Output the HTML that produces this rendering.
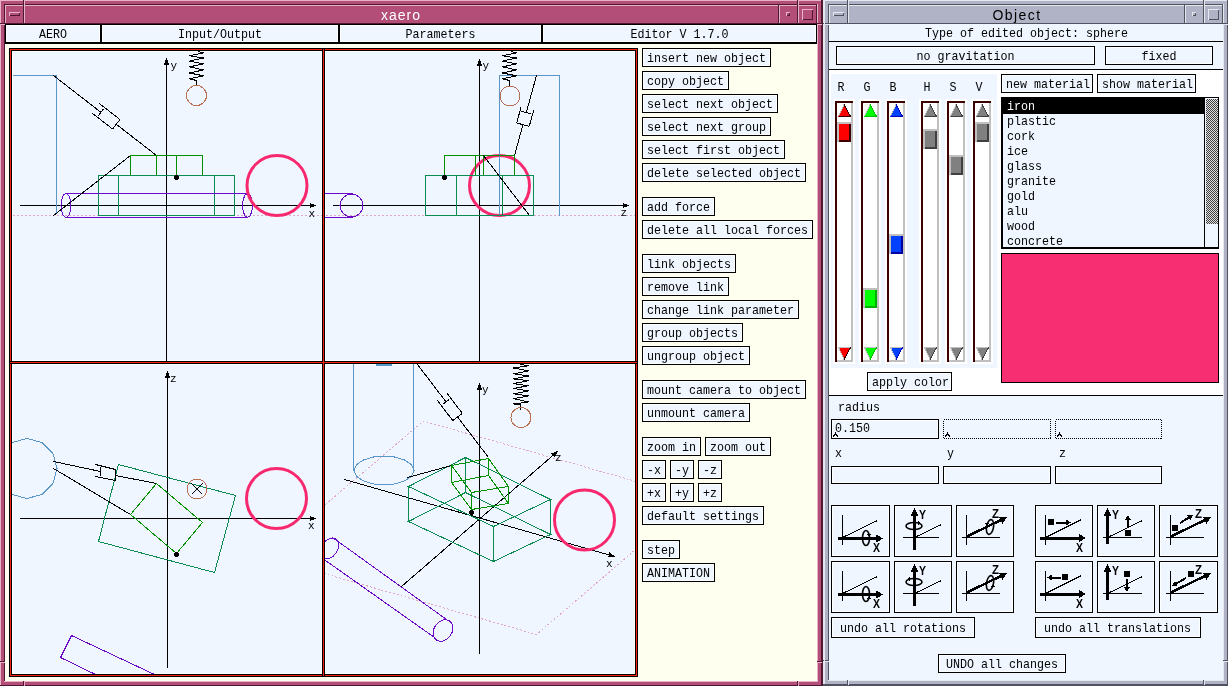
<!DOCTYPE html>
<html><head><meta charset="utf-8"><title>xaero</title>
<style>html,body{margin:0;padding:0;background:#fff;}body{width:1228px;height:686px;overflow:hidden;}svg{display:block;will-change:transform}</style>
</head><body>
<svg width="1228" height="686" viewBox="0 0 1228 686" shape-rendering="crispEdges" text-rendering="optimizeLegibility">
<rect x="0" y="0" width="822" height="686" fill="#b24e77"/>
<rect x="0" y="0" width="822" height="1" fill="#e6b3c9"/>
<rect x="0" y="0" width="1" height="686" fill="#e6b3c9"/>
<rect x="0" y="685" width="822" height="1" fill="#4e1830"/>
<rect x="821" y="0" width="1" height="686" fill="#4e1830"/>
<rect x="4" y="4" width="814" height="1" fill="#4e1830"/>
<rect x="4" y="4" width="1" height="678" fill="#4e1830"/>
<rect x="4" y="681" width="814" height="1" fill="#e6b3c9"/>
<rect x="817" y="4" width="1" height="678" fill="#e6b3c9"/>
<rect x="23" y="0" width="1" height="5" fill="#4e1830"/>
<rect x="24" y="0" width="1" height="5" fill="#e6b3c9"/>
<rect x="23" y="681" width="1" height="5" fill="#4e1830"/>
<rect x="24" y="681" width="1" height="5" fill="#e6b3c9"/>
<rect x="797" y="0" width="1" height="5" fill="#4e1830"/>
<rect x="798" y="0" width="1" height="5" fill="#e6b3c9"/>
<rect x="797" y="681" width="1" height="5" fill="#4e1830"/>
<rect x="798" y="681" width="1" height="5" fill="#e6b3c9"/>
<rect x="0" y="23" width="5" height="1" fill="#4e1830"/>
<rect x="0" y="24" width="5" height="1" fill="#e6b3c9"/>
<rect x="817" y="23" width="5" height="1" fill="#4e1830"/>
<rect x="817" y="24" width="5" height="1" fill="#e6b3c9"/>
<rect x="0" y="661" width="5" height="1" fill="#4e1830"/>
<rect x="0" y="662" width="5" height="1" fill="#e6b3c9"/>
<rect x="817" y="661" width="5" height="1" fill="#4e1830"/>
<rect x="817" y="662" width="5" height="1" fill="#e6b3c9"/>
<rect x="5" y="5" width="19" height="1" fill="#e6b3c9"/>
<rect x="5" y="5" width="1" height="19" fill="#e6b3c9"/>
<rect x="5" y="23" width="19" height="1" fill="#4e1830"/>
<rect x="23" y="5" width="1" height="19" fill="#4e1830"/>
<rect x="24" y="5" width="755" height="1" fill="#e6b3c9"/>
<rect x="24" y="5" width="1" height="19" fill="#e6b3c9"/>
<rect x="24" y="23" width="755" height="1" fill="#4e1830"/>
<rect x="778" y="5" width="1" height="19" fill="#4e1830"/>
<rect x="779" y="5" width="19" height="1" fill="#e6b3c9"/>
<rect x="779" y="5" width="1" height="19" fill="#e6b3c9"/>
<rect x="779" y="23" width="19" height="1" fill="#4e1830"/>
<rect x="797" y="5" width="1" height="19" fill="#4e1830"/>
<rect x="798" y="5" width="19" height="1" fill="#e6b3c9"/>
<rect x="798" y="5" width="1" height="19" fill="#e6b3c9"/>
<rect x="798" y="23" width="19" height="1" fill="#4e1830"/>
<rect x="816" y="5" width="1" height="19" fill="#4e1830"/>
<rect x="822" y="0" width="1" height="686" fill="#4e1830"/>
<rect x="9" y="12" width="11" height="1" fill="#e6b3c9"/>
<rect x="9" y="12" width="1" height="4" fill="#e6b3c9"/>
<rect x="10" y="15" width="10" height="1" fill="#4e1830"/>
<rect x="19" y="13" width="1" height="3" fill="#4e1830"/>
<rect x="786" y="12" width="4" height="1" fill="#e6b3c9"/>
<rect x="786" y="12" width="1" height="4" fill="#e6b3c9"/>
<rect x="787" y="15" width="3" height="1" fill="#4e1830"/>
<rect x="789" y="13" width="1" height="3" fill="#4e1830"/>
<rect x="802" y="9" width="11" height="1" fill="#e6b3c9"/>
<rect x="802" y="9" width="1" height="11" fill="#e6b3c9"/>
<rect x="803" y="19" width="10" height="1" fill="#4e1830"/>
<rect x="812" y="10" width="1" height="10" fill="#4e1830"/>
<text x="401" y="20" fill="#ffffff" font-family="Liberation Sans" font-size="14" text-anchor="middle" letter-spacing="1">xaero</text>
<rect x="5" y="24" width="812" height="657" fill="#fffff0"/>
<rect x="5" y="24" width="812" height="20" fill="#000"/>
<rect x="6" y="25" width="94" height="17" fill="#ffffff"/>
<rect x="7" y="26" width="92" height="15" fill="#eff6ff"/>
<rect x="102" y="25" width="236" height="17" fill="#ffffff"/>
<rect x="103" y="26" width="234" height="15" fill="#eff6ff"/>
<rect x="340" y="25" width="201" height="17" fill="#ffffff"/>
<rect x="341" y="26" width="199" height="15" fill="#eff6ff"/>
<rect x="543" y="25" width="273" height="17" fill="#ffffff"/>
<rect x="544" y="26" width="271" height="15" fill="#eff6ff"/>
<text x="39.0" y="38" fill="#000" font-family="Liberation Mono" font-size="13" textLength="28" lengthAdjust="spacingAndGlyphs" >AERO</text>
<text x="178.0" y="38" fill="#000" font-family="Liberation Mono" font-size="13" textLength="84" lengthAdjust="spacingAndGlyphs" >Input/Output</text>
<text x="405.5" y="38" fill="#000" font-family="Liberation Mono" font-size="13" textLength="70" lengthAdjust="spacingAndGlyphs" >Parameters</text>
<text x="630.5" y="38" fill="#000" font-family="Liberation Mono" font-size="13" textLength="98" lengthAdjust="spacingAndGlyphs" >Editor V 1.7.0</text>
<rect x="9" y="48" width="629" height="629" fill="#000"/>
<rect x="10" y="49" width="627" height="627" fill="#f42010"/>
<rect x="11" y="50" width="625" height="625" fill="#000"/>
<rect x="12" y="51" width="310" height="310" fill="#ffffff"/>
<rect x="13" y="52" width="308" height="308" fill="#eff6ff"/>
<rect x="325" y="51" width="310" height="310" fill="#ffffff"/>
<rect x="326" y="52" width="308" height="308" fill="#eff6ff"/>
<rect x="12" y="364" width="310" height="310" fill="#ffffff"/>
<rect x="13" y="365" width="308" height="308" fill="#eff6ff"/>
<rect x="325" y="364" width="310" height="310" fill="#ffffff"/>
<rect x="326" y="365" width="308" height="308" fill="#eff6ff"/>
<rect x="322" y="48" width="3" height="629" fill="#000"/>
<rect x="9" y="361" width="629" height="3" fill="#000"/>
<rect x="323" y="49" width="1" height="627" fill="#f42010"/>
<rect x="10" y="362" width="627" height="1" fill="#f42010"/>
<rect x="642" y="48" width="129" height="19" fill="#000"/>
<rect x="643" y="49" width="127" height="17" fill="#ffffff"/>
<rect x="644" y="50" width="125" height="15" fill="#eff6ff"/>
<text x="647" y="62" fill="#000" font-family="Liberation Mono" font-size="13" textLength="119" lengthAdjust="spacingAndGlyphs" >insert new object</text>
<rect x="642" y="71" width="87" height="19" fill="#000"/>
<rect x="643" y="72" width="85" height="17" fill="#ffffff"/>
<rect x="644" y="73" width="83" height="15" fill="#eff6ff"/>
<text x="647" y="85" fill="#000" font-family="Liberation Mono" font-size="13" textLength="77" lengthAdjust="spacingAndGlyphs" >copy object</text>
<rect x="642" y="94" width="136" height="19" fill="#000"/>
<rect x="643" y="95" width="134" height="17" fill="#ffffff"/>
<rect x="644" y="96" width="132" height="15" fill="#eff6ff"/>
<text x="647" y="108" fill="#000" font-family="Liberation Mono" font-size="13" textLength="126" lengthAdjust="spacingAndGlyphs" >select next object</text>
<rect x="642" y="117" width="129" height="19" fill="#000"/>
<rect x="643" y="118" width="127" height="17" fill="#ffffff"/>
<rect x="644" y="119" width="125" height="15" fill="#eff6ff"/>
<text x="647" y="131" fill="#000" font-family="Liberation Mono" font-size="13" textLength="119" lengthAdjust="spacingAndGlyphs" >select next group</text>
<rect x="642" y="140" width="143" height="19" fill="#000"/>
<rect x="643" y="141" width="141" height="17" fill="#ffffff"/>
<rect x="644" y="142" width="139" height="15" fill="#eff6ff"/>
<text x="647" y="154" fill="#000" font-family="Liberation Mono" font-size="13" textLength="133" lengthAdjust="spacingAndGlyphs" >select first object</text>
<rect x="642" y="163" width="164" height="19" fill="#000"/>
<rect x="643" y="164" width="162" height="17" fill="#ffffff"/>
<rect x="644" y="165" width="160" height="15" fill="#eff6ff"/>
<text x="647" y="177" fill="#000" font-family="Liberation Mono" font-size="13" textLength="154" lengthAdjust="spacingAndGlyphs" >delete selected object</text>
<rect x="642" y="197" width="73" height="19" fill="#000"/>
<rect x="643" y="198" width="71" height="17" fill="#ffffff"/>
<rect x="644" y="199" width="69" height="15" fill="#eff6ff"/>
<text x="647" y="211" fill="#000" font-family="Liberation Mono" font-size="13" textLength="63" lengthAdjust="spacingAndGlyphs" >add force</text>
<rect x="642" y="220" width="171" height="19" fill="#000"/>
<rect x="643" y="221" width="169" height="17" fill="#ffffff"/>
<rect x="644" y="222" width="167" height="15" fill="#eff6ff"/>
<text x="647" y="234" fill="#000" font-family="Liberation Mono" font-size="13" textLength="161" lengthAdjust="spacingAndGlyphs" >delete all local forces</text>
<rect x="642" y="254" width="94" height="19" fill="#000"/>
<rect x="643" y="255" width="92" height="17" fill="#ffffff"/>
<rect x="644" y="256" width="90" height="15" fill="#eff6ff"/>
<text x="647" y="268" fill="#000" font-family="Liberation Mono" font-size="13" textLength="84" lengthAdjust="spacingAndGlyphs" >link objects</text>
<rect x="642" y="277" width="87" height="19" fill="#000"/>
<rect x="643" y="278" width="85" height="17" fill="#ffffff"/>
<rect x="644" y="279" width="83" height="15" fill="#eff6ff"/>
<text x="647" y="291" fill="#000" font-family="Liberation Mono" font-size="13" textLength="77" lengthAdjust="spacingAndGlyphs" >remove link</text>
<rect x="642" y="300" width="157" height="19" fill="#000"/>
<rect x="643" y="301" width="155" height="17" fill="#ffffff"/>
<rect x="644" y="302" width="153" height="15" fill="#eff6ff"/>
<text x="647" y="314" fill="#000" font-family="Liberation Mono" font-size="13" textLength="147" lengthAdjust="spacingAndGlyphs" >change link parameter</text>
<rect x="642" y="323" width="101" height="19" fill="#000"/>
<rect x="643" y="324" width="99" height="17" fill="#ffffff"/>
<rect x="644" y="325" width="97" height="15" fill="#eff6ff"/>
<text x="647" y="337" fill="#000" font-family="Liberation Mono" font-size="13" textLength="91" lengthAdjust="spacingAndGlyphs" >group objects</text>
<rect x="642" y="346" width="108" height="19" fill="#000"/>
<rect x="643" y="347" width="106" height="17" fill="#ffffff"/>
<rect x="644" y="348" width="104" height="15" fill="#eff6ff"/>
<text x="647" y="360" fill="#000" font-family="Liberation Mono" font-size="13" textLength="98" lengthAdjust="spacingAndGlyphs" >ungroup object</text>
<rect x="642" y="380" width="164" height="19" fill="#000"/>
<rect x="643" y="381" width="162" height="17" fill="#ffffff"/>
<rect x="644" y="382" width="160" height="15" fill="#eff6ff"/>
<text x="647" y="394" fill="#000" font-family="Liberation Mono" font-size="13" textLength="154" lengthAdjust="spacingAndGlyphs" >mount camera to object</text>
<rect x="642" y="403" width="108" height="19" fill="#000"/>
<rect x="643" y="404" width="106" height="17" fill="#ffffff"/>
<rect x="644" y="405" width="104" height="15" fill="#eff6ff"/>
<text x="647" y="417" fill="#000" font-family="Liberation Mono" font-size="13" textLength="98" lengthAdjust="spacingAndGlyphs" >unmount camera</text>
<rect x="642" y="437" width="59" height="19" fill="#000"/>
<rect x="643" y="438" width="57" height="17" fill="#ffffff"/>
<rect x="644" y="439" width="55" height="15" fill="#eff6ff"/>
<text x="647" y="451" fill="#000" font-family="Liberation Mono" font-size="13" textLength="49" lengthAdjust="spacingAndGlyphs" >zoom in</text>
<rect x="705" y="437" width="66" height="19" fill="#000"/>
<rect x="706" y="438" width="64" height="17" fill="#ffffff"/>
<rect x="707" y="439" width="62" height="15" fill="#eff6ff"/>
<text x="710" y="451" fill="#000" font-family="Liberation Mono" font-size="13" textLength="56" lengthAdjust="spacingAndGlyphs" >zoom out</text>
<rect x="642" y="460" width="24" height="19" fill="#000"/>
<rect x="643" y="461" width="22" height="17" fill="#ffffff"/>
<rect x="644" y="462" width="20" height="15" fill="#eff6ff"/>
<text x="647" y="474" fill="#000" font-family="Liberation Mono" font-size="13" textLength="14" lengthAdjust="spacingAndGlyphs" >-x</text>
<rect x="670" y="460" width="24" height="19" fill="#000"/>
<rect x="671" y="461" width="22" height="17" fill="#ffffff"/>
<rect x="672" y="462" width="20" height="15" fill="#eff6ff"/>
<text x="675" y="474" fill="#000" font-family="Liberation Mono" font-size="13" textLength="14" lengthAdjust="spacingAndGlyphs" >-y</text>
<rect x="698" y="460" width="24" height="19" fill="#000"/>
<rect x="699" y="461" width="22" height="17" fill="#ffffff"/>
<rect x="700" y="462" width="20" height="15" fill="#eff6ff"/>
<text x="703" y="474" fill="#000" font-family="Liberation Mono" font-size="13" textLength="14" lengthAdjust="spacingAndGlyphs" >-z</text>
<rect x="642" y="483" width="24" height="19" fill="#000"/>
<rect x="643" y="484" width="22" height="17" fill="#ffffff"/>
<rect x="644" y="485" width="20" height="15" fill="#eff6ff"/>
<text x="647" y="497" fill="#000" font-family="Liberation Mono" font-size="13" textLength="14" lengthAdjust="spacingAndGlyphs" >+x</text>
<rect x="670" y="483" width="24" height="19" fill="#000"/>
<rect x="671" y="484" width="22" height="17" fill="#ffffff"/>
<rect x="672" y="485" width="20" height="15" fill="#eff6ff"/>
<text x="675" y="497" fill="#000" font-family="Liberation Mono" font-size="13" textLength="14" lengthAdjust="spacingAndGlyphs" >+y</text>
<rect x="698" y="483" width="24" height="19" fill="#000"/>
<rect x="699" y="484" width="22" height="17" fill="#ffffff"/>
<rect x="700" y="485" width="20" height="15" fill="#eff6ff"/>
<text x="703" y="497" fill="#000" font-family="Liberation Mono" font-size="13" textLength="14" lengthAdjust="spacingAndGlyphs" >+z</text>
<rect x="642" y="506" width="122" height="19" fill="#000"/>
<rect x="643" y="507" width="120" height="17" fill="#ffffff"/>
<rect x="644" y="508" width="118" height="15" fill="#eff6ff"/>
<text x="647" y="520" fill="#000" font-family="Liberation Mono" font-size="13" textLength="112" lengthAdjust="spacingAndGlyphs" >default settings</text>
<rect x="642" y="540" width="38" height="19" fill="#000"/>
<rect x="643" y="541" width="36" height="17" fill="#ffffff"/>
<rect x="644" y="542" width="34" height="15" fill="#eff6ff"/>
<text x="647" y="554" fill="#000" font-family="Liberation Mono" font-size="13" textLength="28" lengthAdjust="spacingAndGlyphs" >step</text>
<rect x="642" y="563" width="73" height="19" fill="#000"/>
<rect x="643" y="564" width="71" height="17" fill="#ffffff"/>
<rect x="644" y="565" width="69" height="15" fill="#eff6ff"/>
<text x="647" y="577" fill="#000" font-family="Liberation Mono" font-size="13" textLength="63" lengthAdjust="spacingAndGlyphs" >ANIMATION</text>
<rect x="823" y="0" width="405" height="685" fill="#b0b3c6"/>
<rect x="823" y="0" width="405" height="1" fill="#e6e8f0"/>
<rect x="823" y="0" width="1" height="685" fill="#e6e8f0"/>
<rect x="823" y="684" width="405" height="1" fill="#50535f"/>
<rect x="1227" y="0" width="1" height="685" fill="#50535f"/>
<rect x="828" y="4" width="396" height="1" fill="#50535f"/>
<rect x="828" y="4" width="1" height="677" fill="#50535f"/>
<rect x="828" y="680" width="396" height="1" fill="#e6e8f0"/>
<rect x="1223" y="4" width="1" height="677" fill="#e6e8f0"/>
<rect x="847" y="0" width="1" height="5" fill="#50535f"/>
<rect x="848" y="0" width="1" height="5" fill="#e6e8f0"/>
<rect x="847" y="680" width="1" height="5" fill="#50535f"/>
<rect x="848" y="680" width="1" height="5" fill="#e6e8f0"/>
<rect x="1203" y="0" width="1" height="5" fill="#50535f"/>
<rect x="1204" y="0" width="1" height="5" fill="#e6e8f0"/>
<rect x="1203" y="680" width="1" height="5" fill="#50535f"/>
<rect x="1204" y="680" width="1" height="5" fill="#e6e8f0"/>
<rect x="823" y="23" width="6" height="1" fill="#50535f"/>
<rect x="823" y="24" width="6" height="1" fill="#e6e8f0"/>
<rect x="1223" y="23" width="5" height="1" fill="#50535f"/>
<rect x="1223" y="24" width="5" height="1" fill="#e6e8f0"/>
<rect x="823" y="660" width="6" height="1" fill="#50535f"/>
<rect x="823" y="661" width="6" height="1" fill="#e6e8f0"/>
<rect x="1223" y="660" width="5" height="1" fill="#50535f"/>
<rect x="1223" y="661" width="5" height="1" fill="#e6e8f0"/>
<rect x="829" y="5" width="19" height="1" fill="#e6e8f0"/>
<rect x="829" y="5" width="1" height="19" fill="#e6e8f0"/>
<rect x="829" y="23" width="19" height="1" fill="#50535f"/>
<rect x="847" y="5" width="1" height="19" fill="#50535f"/>
<rect x="848" y="5" width="337" height="1" fill="#e6e8f0"/>
<rect x="848" y="5" width="1" height="19" fill="#e6e8f0"/>
<rect x="848" y="23" width="337" height="1" fill="#50535f"/>
<rect x="1184" y="5" width="1" height="19" fill="#50535f"/>
<rect x="1185" y="5" width="19" height="1" fill="#e6e8f0"/>
<rect x="1185" y="5" width="1" height="19" fill="#e6e8f0"/>
<rect x="1185" y="23" width="19" height="1" fill="#50535f"/>
<rect x="1203" y="5" width="1" height="19" fill="#50535f"/>
<rect x="1204" y="5" width="19" height="1" fill="#e6e8f0"/>
<rect x="1204" y="5" width="1" height="19" fill="#e6e8f0"/>
<rect x="1204" y="23" width="19" height="1" fill="#50535f"/>
<rect x="1222" y="5" width="1" height="19" fill="#50535f"/>
<rect x="823" y="685" width="405" height="1" fill="#50535f"/>
<rect x="824" y="1" width="1" height="683" fill="#e6e8f0"/>
<rect x="833" y="12" width="11" height="1" fill="#e6e8f0"/>
<rect x="833" y="12" width="1" height="4" fill="#e6e8f0"/>
<rect x="834" y="15" width="10" height="1" fill="#50535f"/>
<rect x="843" y="13" width="1" height="3" fill="#50535f"/>
<rect x="1192" y="12" width="4" height="1" fill="#e6e8f0"/>
<rect x="1192" y="12" width="1" height="4" fill="#e6e8f0"/>
<rect x="1193" y="15" width="3" height="1" fill="#50535f"/>
<rect x="1195" y="13" width="1" height="3" fill="#50535f"/>
<rect x="1208" y="9" width="11" height="1" fill="#e6e8f0"/>
<rect x="1208" y="9" width="1" height="11" fill="#e6e8f0"/>
<rect x="1209" y="19" width="10" height="1" fill="#50535f"/>
<rect x="1218" y="10" width="1" height="10" fill="#50535f"/>
<text x="1017" y="20" fill="#000" font-family="Liberation Sans" font-size="14" text-anchor="middle" letter-spacing="1.4">Object</text>
<rect x="829" y="24" width="394" height="656" fill="#eff6ff"/>
<clipPath id="vp1"><rect x="12" y="51" width="310" height="310"/></clipPath><g clip-path="url(#vp1)">
<polyline points="12.50,215.50 322.50,215.50" fill="none" stroke="#e0a8c8" stroke-width="1" stroke-dasharray="2 2"/>
<line x1="166.50" y1="360.50" x2="166.50" y2="58.50" stroke="#000000" stroke-width="1" />
<polygon points="166.50,57.50 169.10,64.50 163.90,64.50" fill="#000000"/>
<line x1="19.50" y1="205.50" x2="315.50" y2="205.50" stroke="#000000" stroke-width="1" />
<polygon points="316.50,205.50 309.50,208.10 309.50,202.90" fill="#000000"/>
<text x="170.5" y="69" fill="#000" font-family="Liberation Mono" font-size="11">y</text>
<text x="308.5" y="217" fill="#000" font-family="Liberation Mono" font-size="11">x</text>
<polyline points="12.50,75.50 56.50,75.50 56.50,213.50" fill="none" stroke="#5a96c8" stroke-width="1" />
<polygon points="130.50,155.50 202.50,155.50 202.50,175.50 130.50,175.50" fill="none" stroke="#009000" stroke-width="1" />
<rect x="156" y="155" width="1" height="21" fill="#009000"/>
<rect x="176" y="155" width="1" height="21" fill="#009000"/>
<polygon points="98.50,175.50 234.50,175.50 234.50,215.50 98.50,215.50" fill="none" stroke="#0a8c50" stroke-width="1" />
<rect x="118" y="175" width="1" height="41" fill="#0a8c50"/>
<rect x="214" y="175" width="1" height="41" fill="#0a8c50"/>
<rect x="65" y="193" width="183" height="1" fill="#6a0ac8"/>
<rect x="65" y="217" width="183" height="1" fill="#6a0ac8"/>
<polygon points="71.00,205.50 70.33,211.50 68.50,215.89 66.00,217.50 63.50,215.89 61.67,211.50 61.00,205.50 61.67,199.50 63.50,195.11 66.00,193.50 68.50,195.11 70.33,199.50" fill="none" stroke="#6a0ac8" stroke-width="1" />
<polygon points="252.50,205.50 251.83,211.50 250.00,215.89 247.50,217.50 245.00,215.89 243.17,211.50 242.50,205.50 243.17,199.50 245.00,195.11 247.50,193.50 250.00,195.11 251.83,199.50" fill="none" stroke="#6a0ac8" stroke-width="1" />
<circle cx="277" cy="185.5" r="30" fill="none" stroke="#f8286e" stroke-width="3" shape-rendering="geometricPrecision"/>
<line x1="130.50" y1="155.50" x2="53.50" y2="215.50" stroke="#000000" stroke-width="1" />
<line x1="53.50" y1="75.50" x2="100.89" y2="112.30" stroke="#000000" stroke-width="1" />
<line x1="103.34" y1="109.15" x2="98.43" y2="115.46" stroke="#000000" stroke-width="1" />
<line x1="91.68" y1="112.75" x2="112.61" y2="129.00" stroke="#000000" stroke-width="1" />
<line x1="99.04" y1="103.27" x2="119.97" y2="119.53" stroke="#000000" stroke-width="1" />
<line x1="119.97" y1="119.53" x2="112.61" y2="129.00" stroke="#000000" stroke-width="1" />
<line x1="116.29" y1="124.27" x2="156.50" y2="155.50" stroke="#000000" stroke-width="1" />
<rect x="174" y="176" width="5" height="3" fill="#000000"/>
<rect x="175" y="175" width="3" height="5" fill="#000000"/>
<polyline points="198.50,51.50 203.50,52.90 189.50,55.80 203.50,58.00 189.50,61.10 203.50,63.80 189.50,66.90 203.50,69.90 189.50,73.00 203.50,75.80 189.50,78.80 196.50,80.50 196.50,85.50" fill="none" stroke="#000000" stroke-width="1" />
<polygon points="206.50,95.50 206.01,98.59 204.59,101.38 202.38,103.59 199.59,105.01 196.50,105.50 193.41,105.01 190.62,103.59 188.41,101.38 186.99,98.59 186.50,95.50 186.99,92.41 188.41,89.62 190.62,87.41 193.41,85.99 196.50,85.50 199.59,85.99 202.38,87.41 204.59,89.62 206.01,92.41" fill="none" stroke="#b87050" stroke-width="1" />
</g>
<clipPath id="vp2"><rect x="325" y="51" width="310" height="310"/></clipPath><g clip-path="url(#vp2)">
<polyline points="325.50,215.50 635.50,215.50" fill="none" stroke="#e0a8c8" stroke-width="1" stroke-dasharray="2 2"/>
<line x1="479.50" y1="360.50" x2="479.50" y2="59.50" stroke="#000000" stroke-width="1" />
<polygon points="479.50,58.50 482.10,65.50 476.90,65.50" fill="#000000"/>
<line x1="332.50" y1="205.50" x2="628.50" y2="205.50" stroke="#000000" stroke-width="1" />
<polygon points="629.50,205.50 622.50,208.10 622.50,202.90" fill="#000000"/>
<text x="482.5" y="69" fill="#000" font-family="Liberation Mono" font-size="11">y</text>
<text x="620.5" y="216" fill="#000" font-family="Liberation Mono" font-size="11">z</text>
<circle cx="499.5" cy="185.5" r="30" fill="none" stroke="#f8286e" stroke-width="3" shape-rendering="geometricPrecision"/>
<polyline points="499.50,215.50 499.50,75.50 559.50,75.50 559.50,215.50" fill="none" stroke="#5a96c8" stroke-width="1" />
<polygon points="444.50,155.50 514.50,155.50 514.50,175.50 444.50,175.50" fill="none" stroke="#009000" stroke-width="1" />
<rect x="475" y="155" width="1" height="21" fill="#009000"/>
<rect x="483" y="155" width="1" height="21" fill="#009000"/>
<polygon points="425.50,175.50 533.50,175.50 533.50,215.50 425.50,215.50" fill="none" stroke="#0a8c50" stroke-width="1" />
<rect x="456" y="175" width="1" height="41" fill="#0a8c50"/>
<rect x="502" y="175" width="1" height="41" fill="#0a8c50"/>
<rect x="325" y="193" width="28" height="1" fill="#6a0ac8"/>
<rect x="325" y="217" width="28" height="1" fill="#6a0ac8"/>
<polygon points="363.00,205.50 362.12,209.90 359.63,213.63 355.90,216.12 351.50,217.00 347.10,216.12 343.37,213.63 340.88,209.90 340.00,205.50 340.88,201.10 343.37,197.37 347.10,194.88 351.50,194.00 355.90,194.88 359.63,197.37 362.12,201.10" fill="none" stroke="#6a0ac8" stroke-width="1" />
<line x1="483.50" y1="155.50" x2="529.50" y2="215.50" stroke="#000000" stroke-width="1" />
<line x1="536.50" y1="75.50" x2="526.29" y2="112.62" stroke="#000000" stroke-width="1" />
<line x1="531.11" y1="113.95" x2="521.47" y2="111.30" stroke="#000000" stroke-width="1" />
<line x1="521.22" y1="106.56" x2="516.71" y2="122.95" stroke="#000000" stroke-width="1" />
<line x1="533.75" y1="110.01" x2="529.24" y2="126.40" stroke="#000000" stroke-width="1" />
<line x1="529.24" y1="126.40" x2="516.71" y2="122.95" stroke="#000000" stroke-width="1" />
<line x1="522.98" y1="124.67" x2="514.50" y2="155.50" stroke="#000000" stroke-width="1" />
<rect x="442" y="176" width="5" height="3" fill="#000000"/>
<rect x="443" y="175" width="3" height="5" fill="#000000"/>
<polyline points="511.50,51.50 516.50,52.90 502.50,55.80 516.50,58.00 502.50,61.10 516.50,63.80 502.50,66.90 516.50,69.90 502.50,73.00 516.50,75.80 502.50,78.80 509.50,80.50 509.50,85.50" fill="none" stroke="#000000" stroke-width="1" />
<polygon points="520.00,96.00 519.51,99.09 518.09,101.88 515.88,104.09 513.09,105.51 510.00,106.00 506.91,105.51 504.12,104.09 501.91,101.88 500.49,99.09 500.00,96.00 500.49,92.91 501.91,90.12 504.12,87.91 506.91,86.49 510.00,86.00 513.09,86.49 515.88,87.91 518.09,90.12 519.51,92.91" fill="none" stroke="#b87050" stroke-width="1" />
</g>
<clipPath id="vp3"><rect x="12" y="364" width="310" height="310"/></clipPath><g clip-path="url(#vp3)">
<line x1="167.50" y1="667.50" x2="167.50" y2="371.50" stroke="#000000" stroke-width="1" />
<polygon points="167.50,370.50 170.10,377.50 164.90,377.50" fill="#000000"/>
<line x1="19.50" y1="518.50" x2="315.50" y2="518.50" stroke="#000000" stroke-width="1" />
<polygon points="316.50,518.50 309.50,521.10 309.50,515.90" fill="#000000"/>
<text x="170" y="382" fill="#000" font-family="Liberation Mono" font-size="11">z</text>
<text x="308" y="529" fill="#000" font-family="Liberation Mono" font-size="11">x</text>
<polygon points="57.00,468.50 52.98,483.50 42.00,494.48 27.00,498.50 12.00,494.48 1.02,483.50 -3.00,468.50 1.02,453.50 12.00,442.52 27.00,438.50 42.00,442.52 52.98,453.50" fill="none" stroke="#5a96c8" stroke-width="1" />
<polygon points="118.50,464.50 235.50,495.50 214.50,572.50 98.50,541.50" fill="none" stroke="#0a8c50" stroke-width="1" />
<polygon points="156.50,483.50 202.50,522.50 176.50,553.50 130.50,514.50" fill="none" stroke="#009000" stroke-width="1" />
<polyline points="154.50,674.50 71.50,635.50 60.50,657.50 95.50,674.50" fill="none" stroke="#6a0ac8" stroke-width="1" />
<circle cx="276.5" cy="498.5" r="30" fill="none" stroke="#f8286e" stroke-width="3" shape-rendering="geometricPrecision"/>
<line x1="53.50" y1="461.50" x2="100.50" y2="471.50" stroke="#000000" stroke-width="1" />
<rect x="100" y="467" width="1" height="9" fill="#000000"/>
<line x1="95.50" y1="464.50" x2="115.50" y2="469.50" stroke="#000000" stroke-width="1" />
<line x1="95.50" y1="476.50" x2="115.50" y2="480.50" stroke="#000000" stroke-width="1" />
<rect x="115" y="469" width="1" height="12" fill="#000000"/>
<line x1="115.50" y1="475.50" x2="156.50" y2="483.50" stroke="#000000" stroke-width="1" />
<line x1="53.50" y1="468.50" x2="130.50" y2="514.50" stroke="#000000" stroke-width="1" />
<rect x="174" y="553" width="5" height="3" fill="#000000"/>
<rect x="175" y="552" width="3" height="5" fill="#000000"/>
<polygon points="207.00,489.00 206.51,492.09 205.09,494.88 202.88,497.09 200.09,498.51 197.00,499.00 193.91,498.51 191.12,497.09 188.91,494.88 187.49,492.09 187.00,489.00 187.49,485.91 188.91,483.12 191.12,480.91 193.91,479.49 197.00,479.00 200.09,479.49 202.88,480.91 205.09,483.12 206.51,485.91" fill="none" stroke="#b87050" stroke-width="1" />
<line x1="191.50" y1="483.50" x2="202.50" y2="494.50" stroke="#000000" stroke-width="1" />
<line x1="202.50" y1="483.50" x2="191.50" y2="494.50" stroke="#000000" stroke-width="1" />
</g>
<clipPath id="vp4"><rect x="325" y="364" width="310" height="310"/></clipPath><g clip-path="url(#vp4)">
<polyline points="264.30,556.40 423.50,421.10 695.30,498.30 536.50,634.50 264.30,556.40" fill="none" stroke="#e0a8c8" stroke-width="1" stroke-dasharray="2 2"/>
<line x1="479.50" y1="653.50" x2="479.50" y2="383.50" stroke="#000000" stroke-width="1" />
<polygon points="479.50,382.50 482.10,389.50 476.90,389.50" fill="#000000"/>
<line x1="344.50" y1="479.50" x2="614.50" y2="556.50" stroke="#000000" stroke-width="1" />
<polygon points="615.46,556.77 608.02,557.35 609.44,552.35" fill="#000000"/>
<line x1="401.50" y1="586.50" x2="557.50" y2="451.50" stroke="#000000" stroke-width="1" />
<polygon points="558.26,450.85 554.66,457.39 551.26,453.46" fill="#000000"/>
<text x="482" y="393" fill="#000" font-family="Liberation Mono" font-size="11">y</text>
<text x="606" y="567" fill="#000" font-family="Liberation Mono" font-size="11">x</text>
<text x="555" y="461" fill="#000" font-family="Liberation Mono" font-size="11">z</text>
<circle cx="584.5" cy="520" r="30" fill="none" stroke="#f8286e" stroke-width="3" shape-rendering="geometricPrecision"/>
<rect x="353" y="364" width="1" height="107" fill="#5a96c8"/>
<rect x="413" y="364" width="1" height="107" fill="#5a96c8"/>
<polygon points="414.00,470.50 411.72,476.05 405.21,480.75 395.48,483.90 384.00,485.00 372.52,483.90 362.79,480.75 356.28,476.05 354.00,470.50 356.28,464.95 362.79,460.25 372.52,457.10 384.00,456.00 395.48,457.10 405.21,460.25 411.72,464.95" fill="none" stroke="#5a96c8" stroke-width="1" />
<rect x="376" y="364" width="16" height="2" fill="#5a96c8"/>
<polygon points="408.50,486.50 465.50,457.50 550.50,499.50 493.50,526.50" fill="none" stroke="#0a8c50" stroke-width="1" />
<polygon points="408.50,521.50 465.50,492.50 550.50,534.50 493.50,561.50" fill="none" stroke="#0a8c50" stroke-width="1" />
<line x1="408.50" y1="486.50" x2="408.50" y2="521.50" stroke="#0a8c50" stroke-width="1" />
<line x1="465.50" y1="457.50" x2="465.50" y2="492.50" stroke="#0a8c50" stroke-width="1" />
<line x1="550.50" y1="499.50" x2="550.50" y2="534.50" stroke="#0a8c50" stroke-width="1" />
<line x1="493.50" y1="526.50" x2="493.50" y2="561.50" stroke="#0a8c50" stroke-width="1" />
<polygon points="451.50,465.50 488.50,458.50 508.50,486.50 471.50,492.50" fill="none" stroke="#009000" stroke-width="1" />
<polygon points="451.50,482.50 488.50,475.50 508.50,503.50 471.50,509.50" fill="none" stroke="#009000" stroke-width="1" />
<line x1="451.50" y1="465.50" x2="451.50" y2="482.50" stroke="#009000" stroke-width="1" />
<line x1="488.50" y1="458.50" x2="488.50" y2="475.50" stroke="#009000" stroke-width="1" />
<line x1="508.50" y1="486.50" x2="508.50" y2="503.50" stroke="#009000" stroke-width="1" />
<line x1="471.50" y1="492.50" x2="471.50" y2="509.50" stroke="#009000" stroke-width="1" />
<line x1="332.50" y1="537.50" x2="446.50" y2="619.50" stroke="#6a0ac8" stroke-width="1" />
<line x1="325.50" y1="560.50" x2="434.50" y2="637.50" stroke="#6a0ac8" stroke-width="1" />
<ellipse cx="443" cy="630.5" rx="9" ry="11.5" transform="rotate(35.4 443 630.5)" fill="none" stroke="#6a0ac8" stroke-width="1"/>
<ellipse cx="329.5" cy="548.5" rx="8" ry="11.5" transform="rotate(35.4 329.5 548.5)" fill="none" stroke="#6a0ac8" stroke-width="1"/>
<line x1="407.50" y1="477.50" x2="451.50" y2="465.50" stroke="#000000" stroke-width="1" />
<line x1="417.50" y1="364.50" x2="446.02" y2="401.86" stroke="#000000" stroke-width="1" />
<line x1="449.20" y1="399.43" x2="442.84" y2="404.28" stroke="#000000" stroke-width="1" />
<line x1="437.00" y1="399.93" x2="452.78" y2="420.60" stroke="#000000" stroke-width="1" />
<line x1="446.54" y1="392.65" x2="462.32" y2="413.32" stroke="#000000" stroke-width="1" />
<line x1="462.32" y1="413.32" x2="452.78" y2="420.60" stroke="#000000" stroke-width="1" />
<line x1="457.55" y1="416.96" x2="488.50" y2="457.50" stroke="#000000" stroke-width="1" />
<rect x="469" y="511" width="5" height="3" fill="#000000"/>
<rect x="470" y="510" width="3" height="5" fill="#000000"/>
<polyline points="520.50,364.50 528.50,365.80 513.50,368.00 528.50,370.90 513.50,373.80 528.50,376.00 513.50,378.90 528.50,380.70 513.50,383.60 528.50,385.80 513.50,388.40 528.50,390.90 513.50,393.80 528.50,396.00 513.50,398.60 528.50,401.90 513.50,404.00 520.50,404.50 520.50,409.50" fill="none" stroke="#000000" stroke-width="1" />
<polygon points="531.00,417.50 530.51,420.59 529.09,423.38 526.88,425.59 524.09,427.01 521.00,427.50 517.91,427.01 515.12,425.59 512.91,423.38 511.49,420.59 511.00,417.50 511.49,414.41 512.91,411.62 515.12,409.41 517.91,407.99 521.00,407.50 524.09,407.99 526.88,409.41 529.09,411.62 530.51,414.41" fill="none" stroke="#b87050" stroke-width="1" />
</g>
<text x="925" y="37" fill="#000" font-family="Liberation Mono" font-size="13" textLength="203" lengthAdjust="spacingAndGlyphs" >Type of edited object: sphere</text>
<rect x="829" y="41" width="394" height="1" fill="#000"/>
<rect x="836" y="46" width="259" height="19" fill="#000"/>
<rect x="837" y="47" width="257" height="17" fill="#ffffff"/>
<rect x="838" y="48" width="255" height="15" fill="#eff6ff"/>
<text x="916.5" y="60" fill="#000" font-family="Liberation Mono" font-size="13" textLength="98" lengthAdjust="spacingAndGlyphs" >no gravitation</text>
<rect x="1105" y="46" width="108" height="19" fill="#000"/>
<rect x="1106" y="47" width="106" height="17" fill="#ffffff"/>
<rect x="1107" y="48" width="104" height="15" fill="#eff6ff"/>
<text x="1141.5" y="60" fill="#000" font-family="Liberation Mono" font-size="13" textLength="35" lengthAdjust="spacingAndGlyphs" >fixed</text>
<rect x="829" y="69" width="394" height="1" fill="#000"/>
<rect x="829" y="70" width="394" height="325" fill="#ffffff"/>
<rect x="831" y="74" width="166" height="294" fill="#eff6ff"/>
<text x="837.5" y="91" fill="#000" font-family="Liberation Mono" font-size="13" textLength="7" lengthAdjust="spacingAndGlyphs" >R</text>
<text x="863.5" y="91" fill="#000" font-family="Liberation Mono" font-size="13" textLength="7" lengthAdjust="spacingAndGlyphs" >G</text>
<text x="889.5" y="91" fill="#000" font-family="Liberation Mono" font-size="13" textLength="7" lengthAdjust="spacingAndGlyphs" >B</text>
<text x="923.5" y="91" fill="#000" font-family="Liberation Mono" font-size="13" textLength="7" lengthAdjust="spacingAndGlyphs" >H</text>
<text x="949.5" y="91" fill="#000" font-family="Liberation Mono" font-size="13" textLength="7" lengthAdjust="spacingAndGlyphs" >S</text>
<text x="975.5" y="91" fill="#000" font-family="Liberation Mono" font-size="13" textLength="7" lengthAdjust="spacingAndGlyphs" >V</text>
<rect x="833" y="99" width="22" height="265" fill="#ffffff"/>
<rect x="835" y="101" width="18" height="261" fill="#ffffff"/>
<rect x="835" y="101" width="18" height="2" fill="#3c0000"/>
<rect x="835" y="101" width="2" height="261" fill="#3c0000"/>
<rect x="851" y="103" width="2" height="259" fill="#c0c0c0"/>
<rect x="837" y="360" width="16" height="2" fill="#c0c0c0"/>
<polygon points="844.00,104.00 851.00,117.00 838.00,117.00" fill="#ff0000"/>
<polyline points="838.5,116.5 844,104.5" stroke="#c0c0c0" stroke-width="1" fill="none"/>
<polyline points="844,104.5 850.5,116.5 838.5,116.5" stroke="#3c0000" stroke-width="1" fill="none"/>
<polygon points="838.00,347.00 851.00,347.00 844.00,360.00" fill="#ff0000"/>
<polyline points="850.5,347.5 838.5,347.5 844,359.5" stroke="#c0c0c0" stroke-width="1" fill="none"/>
<polyline points="844,359.5 850.5,347.5" stroke="#3c0000" stroke-width="1" fill="none"/>
<rect x="837" y="122" width="14" height="20" fill="#c0c0c0"/>
<rect x="839" y="124" width="12" height="18" fill="#3c0000"/>
<rect x="839" y="124" width="10" height="16" fill="#ff0000"/>
<rect x="859" y="99" width="22" height="265" fill="#ffffff"/>
<rect x="861" y="101" width="18" height="261" fill="#ffffff"/>
<rect x="861" y="101" width="18" height="2" fill="#3c0000"/>
<rect x="861" y="101" width="2" height="261" fill="#3c0000"/>
<rect x="877" y="103" width="2" height="259" fill="#c0c0c0"/>
<rect x="863" y="360" width="16" height="2" fill="#c0c0c0"/>
<polygon points="870.00,104.00 877.00,117.00 864.00,117.00" fill="#00ff00"/>
<polyline points="864.5,116.5 870,104.5" stroke="#c0c0c0" stroke-width="1" fill="none"/>
<polyline points="870,104.5 876.5,116.5 864.5,116.5" stroke="#00c000" stroke-width="1" fill="none"/>
<polygon points="864.00,347.00 877.00,347.00 870.00,360.00" fill="#00ff00"/>
<polyline points="876.5,347.5 864.5,347.5 870,359.5" stroke="#c0c0c0" stroke-width="1" fill="none"/>
<polyline points="870,359.5 876.5,347.5" stroke="#00c000" stroke-width="1" fill="none"/>
<rect x="863" y="288" width="14" height="20" fill="#c0c0c0"/>
<rect x="865" y="290" width="12" height="18" fill="#00b000"/>
<rect x="865" y="290" width="10" height="16" fill="#00ff00"/>
<rect x="885" y="99" width="22" height="265" fill="#ffffff"/>
<rect x="887" y="101" width="18" height="261" fill="#ffffff"/>
<rect x="887" y="101" width="18" height="2" fill="#3c0000"/>
<rect x="887" y="101" width="2" height="261" fill="#3c0000"/>
<rect x="903" y="103" width="2" height="259" fill="#c0c0c0"/>
<rect x="889" y="360" width="16" height="2" fill="#c0c0c0"/>
<polygon points="896.00,104.00 903.00,117.00 890.00,117.00" fill="#0040ff"/>
<polyline points="890.5,116.5 896,104.5" stroke="#c0c0c0" stroke-width="1" fill="none"/>
<polyline points="896,104.5 902.5,116.5 890.5,116.5" stroke="#0000c0" stroke-width="1" fill="none"/>
<polygon points="890.00,347.00 903.00,347.00 896.00,360.00" fill="#0040ff"/>
<polyline points="902.5,347.5 890.5,347.5 896,359.5" stroke="#c0c0c0" stroke-width="1" fill="none"/>
<polyline points="896,359.5 902.5,347.5" stroke="#0000c0" stroke-width="1" fill="none"/>
<rect x="889" y="234" width="14" height="20" fill="#c0c0c0"/>
<rect x="891" y="236" width="12" height="18" fill="#0000a0"/>
<rect x="891" y="236" width="10" height="16" fill="#0040ff"/>
<rect x="919" y="99" width="22" height="265" fill="#ffffff"/>
<rect x="921" y="101" width="18" height="261" fill="#ffffff"/>
<rect x="921" y="101" width="18" height="2" fill="#3c0000"/>
<rect x="921" y="101" width="2" height="261" fill="#3c0000"/>
<rect x="937" y="103" width="2" height="259" fill="#c0c0c0"/>
<rect x="923" y="360" width="16" height="2" fill="#c0c0c0"/>
<polygon points="930.00,104.00 937.00,117.00 924.00,117.00" fill="#808080"/>
<polyline points="924.5,116.5 930,104.5" stroke="#c0c0c0" stroke-width="1" fill="none"/>
<polyline points="930,104.5 936.5,116.5 924.5,116.5" stroke="#404040" stroke-width="1" fill="none"/>
<polygon points="924.00,347.00 937.00,347.00 930.00,360.00" fill="#808080"/>
<polyline points="936.5,347.5 924.5,347.5 930,359.5" stroke="#c0c0c0" stroke-width="1" fill="none"/>
<polyline points="930,359.5 936.5,347.5" stroke="#404040" stroke-width="1" fill="none"/>
<rect x="923" y="129" width="14" height="20" fill="#c0c0c0"/>
<rect x="925" y="131" width="12" height="18" fill="#404040"/>
<rect x="925" y="131" width="10" height="16" fill="#808080"/>
<rect x="945" y="99" width="22" height="265" fill="#ffffff"/>
<rect x="947" y="101" width="18" height="261" fill="#ffffff"/>
<rect x="947" y="101" width="18" height="2" fill="#3c0000"/>
<rect x="947" y="101" width="2" height="261" fill="#3c0000"/>
<rect x="963" y="103" width="2" height="259" fill="#c0c0c0"/>
<rect x="949" y="360" width="16" height="2" fill="#c0c0c0"/>
<polygon points="956.00,104.00 963.00,117.00 950.00,117.00" fill="#808080"/>
<polyline points="950.5,116.5 956,104.5" stroke="#c0c0c0" stroke-width="1" fill="none"/>
<polyline points="956,104.5 962.5,116.5 950.5,116.5" stroke="#404040" stroke-width="1" fill="none"/>
<polygon points="950.00,347.00 963.00,347.00 956.00,360.00" fill="#808080"/>
<polyline points="962.5,347.5 950.5,347.5 956,359.5" stroke="#c0c0c0" stroke-width="1" fill="none"/>
<polyline points="956,359.5 962.5,347.5" stroke="#404040" stroke-width="1" fill="none"/>
<rect x="949" y="155" width="14" height="20" fill="#c0c0c0"/>
<rect x="951" y="157" width="12" height="18" fill="#404040"/>
<rect x="951" y="157" width="10" height="16" fill="#808080"/>
<rect x="971" y="99" width="22" height="265" fill="#ffffff"/>
<rect x="973" y="101" width="18" height="261" fill="#ffffff"/>
<rect x="973" y="101" width="18" height="2" fill="#3c0000"/>
<rect x="973" y="101" width="2" height="261" fill="#3c0000"/>
<rect x="989" y="103" width="2" height="259" fill="#c0c0c0"/>
<rect x="975" y="360" width="16" height="2" fill="#c0c0c0"/>
<polygon points="982.00,104.00 989.00,117.00 976.00,117.00" fill="#808080"/>
<polyline points="976.5,116.5 982,104.5" stroke="#c0c0c0" stroke-width="1" fill="none"/>
<polyline points="982,104.5 988.5,116.5 976.5,116.5" stroke="#404040" stroke-width="1" fill="none"/>
<polygon points="976.00,347.00 989.00,347.00 982.00,360.00" fill="#808080"/>
<polyline points="988.5,347.5 976.5,347.5 982,359.5" stroke="#c0c0c0" stroke-width="1" fill="none"/>
<polyline points="982,359.5 988.5,347.5" stroke="#404040" stroke-width="1" fill="none"/>
<rect x="975" y="122" width="14" height="20" fill="#c0c0c0"/>
<rect x="977" y="124" width="12" height="18" fill="#404040"/>
<rect x="977" y="124" width="10" height="16" fill="#808080"/>
<rect x="867" y="372" width="85" height="19" fill="#000"/>
<rect x="868" y="373" width="83" height="17" fill="#ffffff"/>
<rect x="869" y="374" width="81" height="15" fill="#eff6ff"/>
<text x="872" y="386" fill="#000" font-family="Liberation Mono" font-size="13" textLength="77" lengthAdjust="spacingAndGlyphs" >apply color</text>
<rect x="829" y="395" width="394" height="1" fill="#000"/>
<rect x="1001" y="74" width="92" height="19" fill="#000"/>
<rect x="1002" y="75" width="90" height="17" fill="#ffffff"/>
<rect x="1003" y="76" width="88" height="15" fill="#eff6ff"/>
<text x="1006" y="88" fill="#000" font-family="Liberation Mono" font-size="13" textLength="84" lengthAdjust="spacingAndGlyphs" >new material</text>
<rect x="1097" y="74" width="99" height="19" fill="#000"/>
<rect x="1098" y="75" width="97" height="17" fill="#ffffff"/>
<rect x="1099" y="76" width="95" height="15" fill="#eff6ff"/>
<text x="1102" y="88" fill="#000" font-family="Liberation Mono" font-size="13" textLength="91" lengthAdjust="spacingAndGlyphs" >show material</text>
<rect x="1001" y="97" width="218" height="152" fill="#000"/>
<rect x="1003" y="98" width="201" height="149" fill="#eff6ff"/>
<rect x="1003" y="97" width="201" height="17" fill="#000"/>
<text x="1007" y="110" fill="#fff" font-family="Liberation Mono" font-size="13" textLength="28" lengthAdjust="spacingAndGlyphs" >iron</text>
<text x="1007" y="125" fill="#000" font-family="Liberation Mono" font-size="13" textLength="49" lengthAdjust="spacingAndGlyphs" >plastic</text>
<text x="1007" y="140" fill="#000" font-family="Liberation Mono" font-size="13" textLength="28" lengthAdjust="spacingAndGlyphs" >cork</text>
<text x="1007" y="155" fill="#000" font-family="Liberation Mono" font-size="13" textLength="21" lengthAdjust="spacingAndGlyphs" >ice</text>
<text x="1007" y="170" fill="#000" font-family="Liberation Mono" font-size="13" textLength="35" lengthAdjust="spacingAndGlyphs" >glass</text>
<text x="1007" y="185" fill="#000" font-family="Liberation Mono" font-size="13" textLength="49" lengthAdjust="spacingAndGlyphs" >granite</text>
<text x="1007" y="200" fill="#000" font-family="Liberation Mono" font-size="13" textLength="28" lengthAdjust="spacingAndGlyphs" >gold</text>
<text x="1007" y="215" fill="#000" font-family="Liberation Mono" font-size="13" textLength="21" lengthAdjust="spacingAndGlyphs" >alu</text>
<text x="1007" y="230" fill="#000" font-family="Liberation Mono" font-size="13" textLength="28" lengthAdjust="spacingAndGlyphs" >wood</text>
<text x="1007" y="245" fill="#000" font-family="Liberation Mono" font-size="13" textLength="56" lengthAdjust="spacingAndGlyphs" >concrete</text>
<rect x="1204" y="98" width="1" height="149" fill="#000"/>
<rect x="1205" y="98" width="13" height="149" fill="#eff6ff"/>
<pattern id="stip" width="2" height="2" patternUnits="userSpaceOnUse"><rect width="2" height="2" fill="#e0e0e0"/><rect width="1" height="1" fill="#404040"/><rect x="1" y="1" width="1" height="1" fill="#404040"/></pattern>
<rect x="1206" y="99" width="12" height="125" fill="url(#stip)"/>
<rect x="1001" y="253" width="218" height="130" fill="#000"/>
<rect x="1002" y="254" width="216" height="128" fill="#f82e72"/>
<text x="838" y="411" fill="#000" font-family="Liberation Mono" font-size="13" textLength="42" lengthAdjust="spacingAndGlyphs" >radius</text>
<rect x="831" y="419" width="108" height="20" fill="#000"/>
<rect x="832" y="420" width="106" height="18" fill="#ffffff"/>
<rect x="833" y="421" width="104" height="16" fill="#eff6ff"/>
<text x="835" y="432" fill="#000" font-family="Liberation Mono" font-size="13" textLength="35" lengthAdjust="spacingAndGlyphs" >0.150</text>
<rect x="943.5" y="419.5" width="107" height="19" fill="none" stroke="#000" stroke-width="1" stroke-dasharray="1 1"/>
<rect x="1055.5" y="419.5" width="106" height="19" fill="none" stroke="#000" stroke-width="1" stroke-dasharray="1 1"/>
<polyline points="833,436.5 835.5,433.5 838,436.5" fill="none" stroke="#000" stroke-width="1.3"/>
<polyline points="945,436.5 947.5,433.5 950,436.5" fill="none" stroke="#000" stroke-width="1.3"/>
<polyline points="1057,436.5 1059.5,433.5 1062,436.5" fill="none" stroke="#000" stroke-width="1.3"/>
<text x="835" y="457" fill="#000" font-family="Liberation Mono" font-size="13" textLength="7" lengthAdjust="spacingAndGlyphs" >x</text>
<text x="947" y="457" fill="#000" font-family="Liberation Mono" font-size="13" textLength="7" lengthAdjust="spacingAndGlyphs" >y</text>
<text x="1059" y="457" fill="#000" font-family="Liberation Mono" font-size="13" textLength="7" lengthAdjust="spacingAndGlyphs" >z</text>
<rect x="831" y="466" width="108" height="18" fill="#000"/>
<rect x="832" y="467" width="106" height="16" fill="#ffffff"/>
<rect x="833" y="468" width="104" height="14" fill="#eff6ff"/>
<rect x="943" y="466" width="108" height="18" fill="#000"/>
<rect x="944" y="467" width="106" height="16" fill="#ffffff"/>
<rect x="945" y="468" width="104" height="14" fill="#eff6ff"/>
<rect x="1055" y="466" width="107" height="18" fill="#000"/>
<rect x="1056" y="467" width="105" height="16" fill="#ffffff"/>
<rect x="1057" y="468" width="103" height="14" fill="#eff6ff"/>
<rect x="831" y="505" width="59" height="52" fill="#000"/>
<rect x="832" y="506" width="57" height="50" fill="#ffffff"/>
<rect x="833" y="507" width="55" height="48" fill="#eff6ff"/>
<rect x="842" y="515" width="1" height="30" fill="#000"/>
<line x1="842.50" y1="537.50" x2="877.50" y2="520.50" stroke="#000" stroke-width="1" />
<line x1="838" y1="538.5" x2="877.00" y2="538.50" stroke="#000" stroke-width="3"/>
<polygon points="883.00,538.50 876.00,542.50 876.00,534.50" fill="#000"/>
<ellipse cx="866" cy="538" rx="3.5" ry="7.5" transform="rotate(0 866 538)" fill="none" stroke="#000" stroke-width="1.6" shape-rendering="geometricPrecision"/>
<polygon points="869.00,537.00 866.60,534.00 871.40,534.00" fill="#000"/>
<text x="873" y="552" fill="#000" font-family="Liberation Sans" font-weight="bold" font-size="12.5" textLength="7" lengthAdjust="spacingAndGlyphs">X</text>
<rect x="894" y="505" width="58" height="52" fill="#000"/>
<rect x="895" y="506" width="56" height="50" fill="#ffffff"/>
<rect x="896" y="507" width="54" height="48" fill="#eff6ff"/>
<rect x="903" y="537" width="36" height="1" fill="#000"/>
<line x1="914.50" y1="537.50" x2="941.50" y2="524.50" stroke="#000" stroke-width="1" />
<line x1="914.5" y1="550" x2="914.50" y2="515.00" stroke="#000" stroke-width="3"/>
<polygon points="914.50,508.00 918.50,516.00 910.50,516.00" fill="#000"/>
<ellipse cx="914" cy="526" rx="8" ry="3.5" transform="rotate(0 914 526)" fill="none" stroke="#000" stroke-width="1.6" shape-rendering="geometricPrecision"/>
<polygon points="921.00,523.00 918.00,525.40 918.00,520.60" fill="#000"/>
<text x="919" y="519" fill="#000" font-family="Liberation Sans" font-weight="bold" font-size="12.5" textLength="7" lengthAdjust="spacingAndGlyphs">Y</text>
<rect x="956" y="505" width="58" height="52" fill="#000"/>
<rect x="957" y="506" width="56" height="50" fill="#ffffff"/>
<rect x="958" y="507" width="54" height="48" fill="#eff6ff"/>
<rect x="966" y="515" width="1" height="30" fill="#000"/>
<rect x="962" y="537" width="38" height="1" fill="#000"/>
<line x1="966" y1="537" x2="1001.61" y2="519.63" stroke="#000" stroke-width="2.5"/>
<polygon points="1007.00,517.00 1002.46,523.66 998.95,516.47" fill="#000"/>
<ellipse cx="990" cy="527" rx="3.5" ry="7.5" transform="rotate(10 990 527)" fill="none" stroke="#000" stroke-width="1.6" shape-rendering="geometricPrecision"/>
<polygon points="987.00,526.00 984.60,523.00 989.40,523.00" fill="#000"/>
<text x="992" y="518" fill="#000" font-family="Liberation Sans" font-weight="bold" font-size="12.5" textLength="7" lengthAdjust="spacingAndGlyphs">Z</text>
<rect x="831" y="561" width="59" height="52" fill="#000"/>
<rect x="832" y="562" width="57" height="50" fill="#ffffff"/>
<rect x="833" y="563" width="55" height="48" fill="#eff6ff"/>
<rect x="842" y="571" width="1" height="30" fill="#000"/>
<line x1="842.50" y1="593.50" x2="877.50" y2="576.50" stroke="#000" stroke-width="1" />
<line x1="838" y1="594.5" x2="877.00" y2="594.50" stroke="#000" stroke-width="3"/>
<polygon points="883.00,594.50 876.00,598.50 876.00,590.50" fill="#000"/>
<ellipse cx="866" cy="594" rx="3.5" ry="7.5" transform="rotate(0 866 594)" fill="none" stroke="#000" stroke-width="1.6" shape-rendering="geometricPrecision"/>
<polygon points="869.00,596.00 871.40,599.00 866.60,599.00" fill="#000"/>
<text x="873" y="608" fill="#000" font-family="Liberation Sans" font-weight="bold" font-size="12.5" textLength="7" lengthAdjust="spacingAndGlyphs">X</text>
<rect x="894" y="561" width="58" height="52" fill="#000"/>
<rect x="895" y="562" width="56" height="50" fill="#ffffff"/>
<rect x="896" y="563" width="54" height="48" fill="#eff6ff"/>
<rect x="903" y="593" width="36" height="1" fill="#000"/>
<line x1="914.50" y1="593.50" x2="941.50" y2="580.50" stroke="#000" stroke-width="1" />
<line x1="914.5" y1="606" x2="914.50" y2="571.00" stroke="#000" stroke-width="3"/>
<polygon points="914.50,564.00 918.50,572.00 910.50,572.00" fill="#000"/>
<ellipse cx="914" cy="582" rx="8" ry="3.5" transform="rotate(0 914 582)" fill="none" stroke="#000" stroke-width="1.6" shape-rendering="geometricPrecision"/>
<polygon points="907.00,579.00 910.00,576.60 910.00,581.40" fill="#000"/>
<text x="919" y="575" fill="#000" font-family="Liberation Sans" font-weight="bold" font-size="12.5" textLength="7" lengthAdjust="spacingAndGlyphs">Y</text>
<rect x="956" y="561" width="58" height="52" fill="#000"/>
<rect x="957" y="562" width="56" height="50" fill="#ffffff"/>
<rect x="958" y="563" width="54" height="48" fill="#eff6ff"/>
<rect x="966" y="571" width="1" height="30" fill="#000"/>
<rect x="962" y="593" width="38" height="1" fill="#000"/>
<line x1="966" y1="593" x2="1001.61" y2="575.63" stroke="#000" stroke-width="2.5"/>
<polygon points="1007.00,573.00 1002.46,579.66 998.95,572.47" fill="#000"/>
<ellipse cx="990" cy="583" rx="3.5" ry="7.5" transform="rotate(10 990 583)" fill="none" stroke="#000" stroke-width="1.6" shape-rendering="geometricPrecision"/>
<polygon points="993.00,584.00 995.40,587.00 990.60,587.00" fill="#000"/>
<text x="992" y="574" fill="#000" font-family="Liberation Sans" font-weight="bold" font-size="12.5" textLength="7" lengthAdjust="spacingAndGlyphs">Z</text>
<rect x="1035" y="505" width="58" height="52" fill="#000"/>
<rect x="1036" y="506" width="56" height="50" fill="#ffffff"/>
<rect x="1037" y="507" width="54" height="48" fill="#eff6ff"/>
<rect x="1045" y="515" width="1" height="30" fill="#000"/>
<line x1="1045.50" y1="537.50" x2="1081.50" y2="519.50" stroke="#000" stroke-width="1" />
<line x1="1040" y1="538" x2="1080.00" y2="538.00" stroke="#000" stroke-width="3"/>
<polygon points="1086.00,538.00 1079.00,542.00 1079.00,534.00" fill="#000"/>
<text x="1076" y="552" fill="#000" font-family="Liberation Sans" font-weight="bold" font-size="12.5" textLength="7" lengthAdjust="spacingAndGlyphs">X</text>
<rect x="1048" y="519" width="6" height="6" fill="#000"/>
<line x1="1056" y1="522.5" x2="1067.00" y2="522.50" stroke="#000" stroke-width="2"/>
<polygon points="1071.00,522.50 1066.00,525.50 1066.00,519.50" fill="#000"/>
<rect x="1097" y="505" width="58" height="52" fill="#000"/>
<rect x="1098" y="506" width="56" height="50" fill="#ffffff"/>
<rect x="1099" y="507" width="54" height="48" fill="#eff6ff"/>
<rect x="1103" y="537" width="39" height="1" fill="#000"/>
<line x1="1107.50" y1="537.50" x2="1142.50" y2="520.50" stroke="#000" stroke-width="1" />
<line x1="1107.5" y1="544" x2="1107.50" y2="515.00" stroke="#000" stroke-width="3"/>
<polygon points="1107.50,508.00 1111.50,516.00 1103.50,516.00" fill="#000"/>
<text x="1112" y="519" fill="#000" font-family="Liberation Sans" font-weight="bold" font-size="12.5" textLength="7" lengthAdjust="spacingAndGlyphs">Y</text>
<rect x="1125" y="530" width="6" height="6" fill="#000"/>
<line x1="1128" y1="527" x2="1128.00" y2="519.00" stroke="#000" stroke-width="2"/>
<polygon points="1128.00,515.00 1131.00,520.00 1125.00,520.00" fill="#000"/>
<rect x="1159" y="505" width="59" height="52" fill="#000"/>
<rect x="1160" y="506" width="57" height="50" fill="#ffffff"/>
<rect x="1161" y="507" width="55" height="48" fill="#eff6ff"/>
<rect x="1170" y="515" width="1" height="30" fill="#000"/>
<rect x="1166" y="537" width="38" height="1" fill="#000"/>
<line x1="1170" y1="537" x2="1205.61" y2="519.63" stroke="#000" stroke-width="2.5"/>
<polygon points="1211.00,517.00 1206.46,523.66 1202.95,516.47" fill="#000"/>
<text x="1195" y="518" fill="#000" font-family="Liberation Sans" font-weight="bold" font-size="12.5" textLength="7" lengthAdjust="spacingAndGlyphs">Z</text>
<rect x="1172" y="525" width="6" height="6" fill="#000"/>
<line x1="1180" y1="523" x2="1189.59" y2="517.10" stroke="#000" stroke-width="2"/>
<polygon points="1193.00,515.00 1190.31,520.18 1187.17,515.07" fill="#000"/>
<rect x="1035" y="561" width="58" height="52" fill="#000"/>
<rect x="1036" y="562" width="56" height="50" fill="#ffffff"/>
<rect x="1037" y="563" width="54" height="48" fill="#eff6ff"/>
<rect x="1045" y="571" width="1" height="30" fill="#000"/>
<line x1="1045.50" y1="593.50" x2="1081.50" y2="575.50" stroke="#000" stroke-width="1" />
<line x1="1040" y1="594" x2="1080.00" y2="594.00" stroke="#000" stroke-width="3"/>
<polygon points="1086.00,594.00 1079.00,598.00 1079.00,590.00" fill="#000"/>
<text x="1076" y="608" fill="#000" font-family="Liberation Sans" font-weight="bold" font-size="12.5" textLength="7" lengthAdjust="spacingAndGlyphs">X</text>
<rect x="1062" y="574" width="6" height="6" fill="#000"/>
<line x1="1061" y1="577.5" x2="1051.00" y2="577.50" stroke="#000" stroke-width="2"/>
<polygon points="1047.00,577.50 1052.00,574.50 1052.00,580.50" fill="#000"/>
<rect x="1097" y="561" width="58" height="52" fill="#000"/>
<rect x="1098" y="562" width="56" height="50" fill="#ffffff"/>
<rect x="1099" y="563" width="54" height="48" fill="#eff6ff"/>
<rect x="1103" y="593" width="39" height="1" fill="#000"/>
<line x1="1107.50" y1="593.50" x2="1142.50" y2="576.50" stroke="#000" stroke-width="1" />
<line x1="1107.5" y1="600" x2="1107.50" y2="571.00" stroke="#000" stroke-width="3"/>
<polygon points="1107.50,564.00 1111.50,572.00 1103.50,572.00" fill="#000"/>
<text x="1112" y="575" fill="#000" font-family="Liberation Sans" font-weight="bold" font-size="12.5" textLength="7" lengthAdjust="spacingAndGlyphs">Y</text>
<rect x="1124" y="571" width="6" height="6" fill="#000"/>
<line x1="1127" y1="579" x2="1127.00" y2="588.00" stroke="#000" stroke-width="2"/>
<polygon points="1127.00,592.00 1124.00,587.00 1130.00,587.00" fill="#000"/>
<rect x="1159" y="561" width="59" height="52" fill="#000"/>
<rect x="1160" y="562" width="57" height="50" fill="#ffffff"/>
<rect x="1161" y="563" width="55" height="48" fill="#eff6ff"/>
<rect x="1170" y="571" width="1" height="30" fill="#000"/>
<rect x="1166" y="593" width="38" height="1" fill="#000"/>
<line x1="1170" y1="593" x2="1205.61" y2="575.63" stroke="#000" stroke-width="2.5"/>
<polygon points="1211.00,573.00 1206.46,579.66 1202.95,572.47" fill="#000"/>
<text x="1195" y="574" fill="#000" font-family="Liberation Sans" font-weight="bold" font-size="12.5" textLength="7" lengthAdjust="spacingAndGlyphs">Z</text>
<rect x="1188" y="571" width="6" height="6" fill="#000"/>
<line x1="1186" y1="578" x2="1175.47" y2="584.02" stroke="#000" stroke-width="2"/>
<polygon points="1172.00,586.00 1174.85,580.91 1177.83,586.12" fill="#000"/>
<rect x="831" y="617" width="144" height="21" fill="#000"/>
<rect x="832" y="618" width="142" height="19" fill="#ffffff"/>
<rect x="833" y="619" width="140" height="17" fill="#eff6ff"/>
<text x="840" y="632" fill="#000" font-family="Liberation Mono" font-size="13" textLength="126" lengthAdjust="spacingAndGlyphs" >undo all rotations</text>
<rect x="1035" y="617" width="166" height="21" fill="#000"/>
<rect x="1036" y="618" width="164" height="19" fill="#ffffff"/>
<rect x="1037" y="619" width="162" height="17" fill="#eff6ff"/>
<text x="1044" y="632" fill="#000" font-family="Liberation Mono" font-size="13" textLength="147" lengthAdjust="spacingAndGlyphs" >undo all translations</text>
<rect x="938" y="654" width="128" height="19" fill="#000"/>
<rect x="939" y="655" width="126" height="17" fill="#ffffff"/>
<rect x="940" y="656" width="124" height="15" fill="#eff6ff"/>
<text x="946" y="668" fill="#000" font-family="Liberation Mono" font-size="13" textLength="112" lengthAdjust="spacingAndGlyphs" >UNDO all changes</text>

</svg>
</body></html>
